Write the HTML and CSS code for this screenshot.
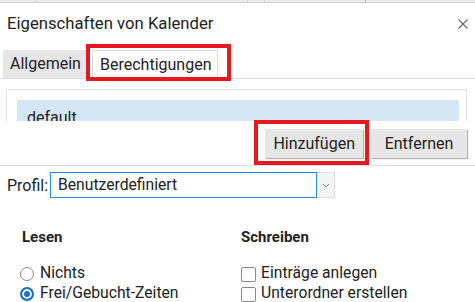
FILE: index.html
```html
<!DOCTYPE html>
<html>
<head lang="de">
    <meta charset="UTF-8">
    <title>Eigenschaften von Kalender</title>
    <link rel="stylesheet" href="styles.css">
</head>
<body>
    <!-- Rest des Fensters dahinter -->
    <div class="backdrop">
        <span class="seg seg1"></span>
        <span class="seg seg2"></span>
        <span class="seg seg3"></span>
        <span class="seg seg4"></span>
        <span class="seg seg5"></span>
    </div>

    <div class="dialog">
        <div class="title-bar">
            <h1>Eigenschaften von Kalender</h1>
            <svg class="close" width="10" height="10" viewBox="0 0 10 10">
                <path d="M0.5 0.5 L9.5 9.5 M9.5 0.5 L0.5 9.5" stroke="#666" stroke-width="1.1" fill="none"/>
            </svg>
        </div>

        <div class="tabs">
            <div class="tab">Allgemein</div>
            <div class="tab active">Berechtigungen</div>
        </div>

        <div class="list">
            <div class="list-item selected">default</div>
        </div>

        <div class="actions">
            <button class="btn">Hinzufügen</button>
            <button class="btn">Entfernen</button>
        </div>

        <div class="profile">
            <label class="profile-label">Profil:</label>
            <div class="select">
                <span class="select-value">Benutzerdefiniert</span>
            </div>
            <div class="select-arrow">
                <svg width="8" height="5" viewBox="0 0 8 5">
                    <path d="M1 1 L4 4 L7 1" stroke="#888" stroke-width="1" fill="none"/>
                </svg>
            </div>
        </div>

        <div class="perms">
            <div class="col">
                <h2>Lesen</h2>
                <label class="opt"><input type="radio" name="lesen"> Nichts</label>
                <label class="opt"><input type="radio" name="lesen" checked> Frei/Gebucht-Zeiten</label>
            </div>
            <div class="col">
                <h2>Schreiben</h2>
                <label class="opt"><input type="checkbox"> Einträge anlegen</label>
                <label class="opt"><input type="checkbox"> Unterordner erstellen</label>
            </div>
        </div>
    </div>

    <!-- rote Markierungen -->
    <div class="mark mark-tab"></div>
    <div class="mark mark-add"></div>
</body>
</html>
```

FILE: styles.css
```css
* {
    padding: 0;
    margin: 0;
    box-sizing: border-box;
}
body {
    width: 475px;
    height: 302px;
    overflow: hidden;
    font-family: Roboto, "Liberation Sans", sans-serif;
    color: #222;
    background-color: #fff;
    position: relative;
}
.backdrop {
    display: flex;
    height: 3px;
    background-color: #ececec;
    border-bottom: 1px solid #d2d2d2;
}
.seg {
    height: 2px;
    border-right: 1px solid #d6d6d6;
}
.seg1 { width: 37px; }
.seg2 { width: 211px; }
.seg3 { width: 17px; }
.seg4 { width: 101px; border-right-color: #b9b9a8; }
.seg5 { flex: 1; border-right: none; }

.title-bar {
    height: 41px;
    display: flex;
    align-items: center;
    justify-content: space-between;
    padding: 0 7px 0 7px;
}
.title-bar h1 {
    font-size: 16.7px;
    font-weight: normal;
    color: #222;
}
.close {
    display: block;
    margin-top: 1px;
}

.tabs {
    display: flex;
    gap: 5px;
    margin-top: 6px;
    padding-left: 3px;
    border-bottom: 1px solid #ddd;
}
.tab {
    height: 28px;
    line-height: 28px;
    font-size: 16px;
    padding: 0 7px;
    width: 84px;
    background-color: #e6e6e6;
}
.tab.active {
    width: 126px;
    padding: 0 7px;
    background-color: #fff;
    border: 1px solid #ddd;
    border-bottom: none;
    line-height: 27px;
}

.list {
    margin: 10px 8px 0 6px;
    height: 32px;
    overflow: hidden;
    border: 1px solid #e2e2e2;
    border-bottom: none;
    padding: 10px 7px 0 10px;
}
.list-item {
    font-size: 16px;
    line-height: 20px;
    padding: 8px 10px;
}
.selected {
    background-color: #d5e6f5;
}

.actions {
    display: flex;
    justify-content: flex-end;
    gap: 8px;
    margin-top: 8px;
    padding: 0 8px 7px 0;
    border-bottom: 1px solid #ddd;
}
.btn {
    min-width: 96px;
    height: 29px;
    padding: 0 8px;
    font-family: Roboto, "Liberation Sans", sans-serif;
    font-size: 16px;
    color: #222;
    background-color: #e6e6e6;
    border: none;
    box-shadow: 1px 1px 1px rgba(0, 0, 0, 0.3);
}

.profile {
    display: flex;
    align-items: center;
    margin-top: 6px;
    padding-left: 7px;
}
.profile-label {
    font-size: 16px;
    width: 43px;
}
.select {
    width: 267px;
    height: 26px;
    border: 1px solid #2b8ad8;
    padding-left: 7px;
    font-size: 15.7px;
    line-height: 24px;
}
.select-arrow {
    width: 18px;
    height: 26px;
    border: 1px solid #ddd;
    border-left: none;
    background-color: #f4f4f4;
    display: flex;
    align-items: center;
    justify-content: center;
}
.select-arrow svg {
    display: block;
    margin-top: 1px;
}

.perms {
    display: grid;
    grid-template-columns: 221px 1fr;
    margin-top: 29px;
    padding-left: 20px;
}
.col h2 {
    font-size: 15px;
    font-weight: bold;
    line-height: 20px;
    margin-bottom: 16px;
    color: #222;
}
.col:first-child h2 {
    padding-left: 2px;
}
.opt {
    display: flex;
    align-items: center;
    gap: 5px;
    font-size: 15.7px;
    line-height: 20px;
    height: 20px;
}
.opt input {
    appearance: none;
    -webkit-appearance: none;
    width: 15px;
    height: 15px;
    margin-top: 2px;
    border: 1px solid #888;
    background-color: #fff;
}
.opt input[type="radio"] {
    width: 14px;
    height: 14px;
    border-radius: 50%;
    margin-right: 1px;
}
.opt input[type="radio"]:checked {
    border: 2px solid #1a6fd6;
    background-color: #1a6fd6;
    box-shadow: inset 0 0 0 2px #fff;
}
.opt input[type="checkbox"] {
    border-radius: 2px;
}

.mark {
    position: absolute;
    border: 4px solid #e5191f;
}
.mark-tab {
    left: 86px;
    top: 44px;
    width: 145px;
    height: 37px;
}
.mark-add {
    left: 254px;
    top: 120px;
    width: 115px;
    height: 45px;
}
```
